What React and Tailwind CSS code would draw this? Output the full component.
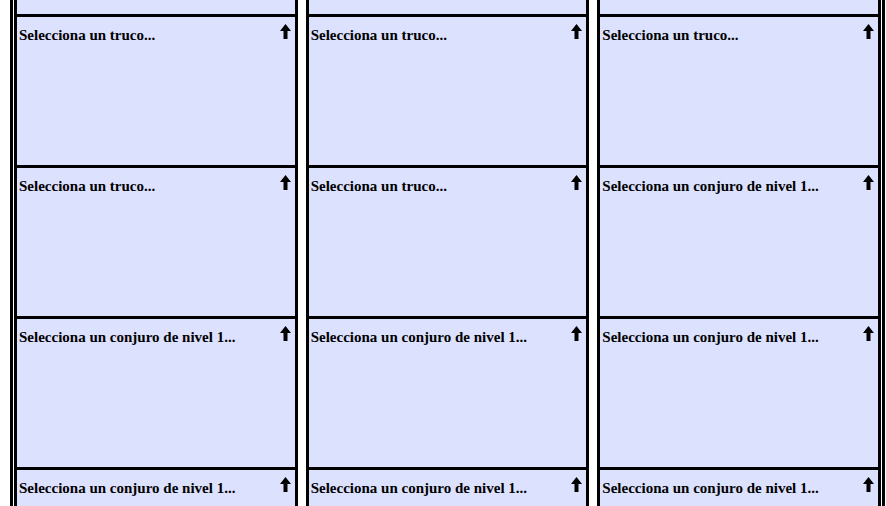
import React from "react";

const slots = [
  "Selecciona un truco...",
  "Selecciona un truco...",
  "Selecciona un truco...",
  "Selecciona un truco...",
  "Selecciona un truco...",
  "Selecciona un truco...",
  "Selecciona un truco...",
  "Selecciona un truco...",
  "Selecciona un conjuro de nivel 1...",
  "Selecciona un conjuro de nivel 1...",
  "Selecciona un conjuro de nivel 1...",
  "Selecciona un conjuro de nivel 1...",
  "Selecciona un conjuro de nivel 1...",
  "Selecciona un conjuro de nivel 1...",
  "Selecciona un conjuro de nivel 1...",
];

function ArrowUp() {
  return (
    <svg width="11" height="15" viewBox="0 0 11 15" className="shrink-0">
      <path d="M5.5 0 L11 7 L7.5 7 L7.5 15 L3.5 15 L3.5 7 L0 7 Z" fill="#000" />
    </svg>
  );
}

function SpellSlot({ label }) {
  return (
    <div className="h-[151px] border-x-[3px] border-b-[3px] border-black bg-[#dce1fe]">
      <div className="flex items-start justify-between pl-[2px] pr-[4px] pt-[7px]">
        <span className="text-[15px] font-bold text-black">{label}</span>
        <ArrowUp />
      </div>
    </div>
  );
}

export default function App() {
  return (
    <div
      className="min-h-screen overflow-hidden bg-white pl-[10px]"
      style={{ fontFamily: '"Liberation Serif", "Times New Roman", serif' }}
    >
      <div className="-mt-[134px] w-[875px] border-x-[3px] border-black px-[1px]">
        <div className="grid grid-cols-3 gap-x-[8px]">
          {slots.map((label, i) => (
            <SpellSlot key={i} label={label} />
          ))}
        </div>
      </div>
    </div>
  );
}
